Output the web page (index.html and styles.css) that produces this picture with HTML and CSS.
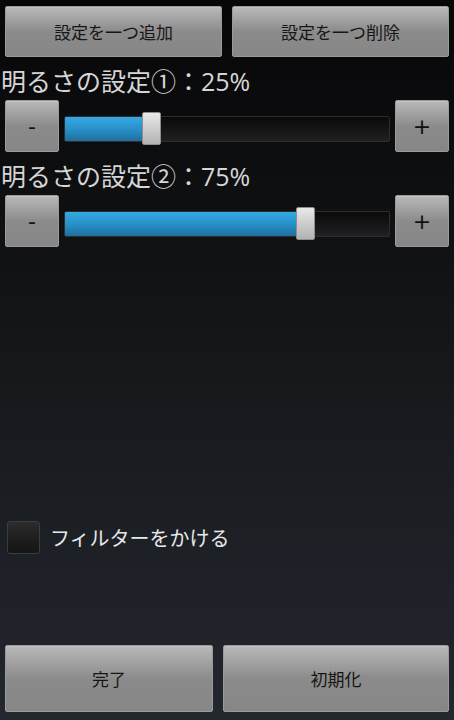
FILE: index.html
```html
<!DOCTYPE html>
<html lang="ja">
<head>
<meta charset="utf-8">
<title>明るさの設定</title>
<link rel="stylesheet" href="styles.css">
</head>
<body>
<div class="screen">
  <div class="top-actions">
    <button class="btn btn-top">設定を一つ追加</button>
    <button class="btn btn-top">設定を一つ削除</button>
  </div>

  <div class="setting">
    <div class="setting-label">明るさの設定①：25%</div>
    <div class="slider-row">
      <button class="btn btn-step">-</button>
      <div class="slider">
        <div class="track">
          <div class="fill" style="width: 87px"></div>
        </div>
        <div class="thumb" style="left: 78px"></div>
      </div>
      <button class="btn btn-step">+</button>
    </div>
  </div>

  <div class="setting">
    <div class="setting-label">明るさの設定②：75%</div>
    <div class="slider-row">
      <button class="btn btn-step">-</button>
      <div class="slider">
        <div class="track">
          <div class="fill" style="width: 241px"></div>
        </div>
        <div class="thumb" style="left: 232px"></div>
      </div>
      <button class="btn btn-step">+</button>
    </div>
  </div>

  <div class="spacer"></div>

  <label class="filter">
    <span class="checkbox"></span>
    <span class="filter-text">フィルターをかける</span>
  </label>

  <div class="spacer-small"></div>

  <div class="bottom-actions">
    <button class="btn btn-bottom btn-done">完了</button>
    <button class="btn btn-bottom btn-reset">初期化</button>
  </div>
</div>
</body>
</html>
```

FILE: styles.css
```css
html, body {
  margin: 0;
  padding: 0;
}

body {
  width: 454px;
  height: 720px;
  overflow: hidden;
  background: linear-gradient(to bottom, #070708 0%, #0f1012 30%, #1b1e23 70%, #23272e 100%);
  font-family: "Open Sans", "Noto Sans CJK JP", sans-serif;
}

.screen {
  height: 720px;
  display: flex;
  flex-direction: column;
  box-sizing: border-box;
}

/* Shared grey button */
.btn {
  display: flex;
  align-items: center;
  justify-content: center;
  border: 1px solid #9a9a9a;
  border-radius: 2px;
  background: linear-gradient(to bottom, #b9b9b9 0%, #a2a2a2 25%, #8b8b8b 50%, #868686 100%);
  color: #161616;
  font-family: "Open Sans", "Noto Sans CJK JP", sans-serif;
  padding: 0;
  margin: 0;
  box-sizing: border-box;
  box-shadow: inset 0 1px 0 rgba(255, 255, 255, 0.15);
}

.top-actions {
  display: flex;
  gap: 10px;
  padding: 6px 5px 0;
}

.btn-top {
  flex: 1;
  height: 51px;
  font-size: 17px;
}

.setting {
  display: flex;
  flex-direction: column;
}

.setting-label {
  height: 43px;
  box-sizing: border-box;
  padding: 6px 0 0 1px;
  font-size: 25px;
  line-height: 37px;
  color: #d6d6d6;
  white-space: nowrap;
}

.slider-row {
  display: flex;
  gap: 5px;
  padding: 0 5px;
  height: 52px;
}

.btn-step {
  width: 54px;
  height: 52px;
  font-size: 22px;
  font-family: "DejaVu Sans", sans-serif;
  color: #101010;
  flex: none;
}

.slider {
  position: relative;
  flex: 1;
}

.track {
  margin-top: 16px;
  height: 26px;
  box-sizing: border-box;
  border: 1px solid #2b2d30;
  border-radius: 2px;
  background: linear-gradient(to bottom, #0a0a0b 0%, #151516 50%, #202022 100%);
  overflow: hidden;
}

.fill {
  height: 100%;
  background: linear-gradient(to bottom, #34a9e4 0%, #2891c9 50%, #1f6f9c 100%);
}

.thumb {
  position: absolute;
  top: 12px;
  width: 19px;
  height: 33px;
  box-sizing: border-box;
  border-radius: 2px;
  border: 1px solid #8e8e8e;
  background: linear-gradient(to bottom, #e9e9e9 0%, #d2d2d2 40%, #b3b3b3 100%);
}

.spacer {
  flex: 1;
}

.filter {
  display: flex;
  align-items: center;
  gap: 10px;
  padding-left: 7px;
  height: 34px;
}

.checkbox {
  width: 33px;
  height: 33px;
  box-sizing: border-box;
  border: 1px solid #3c3c3c;
  border-radius: 3px;
  background: linear-gradient(to bottom, #2c2c2c 0%, #1c1c1c 60%, #151515 100%);
}

.filter-text {
  font-size: 20px;
  color: #e8e8e8;
}

.spacer-small {
  height: 91px;
}

.bottom-actions {
  display: flex;
  gap: 10px;
  padding: 0 5px 8px;
}

.btn-bottom {
  height: 67px;
  font-size: 17px;
}

.btn-done {
  flex: 208 1 0;
}

.btn-reset {
  flex: 226 1 0;
}
```
